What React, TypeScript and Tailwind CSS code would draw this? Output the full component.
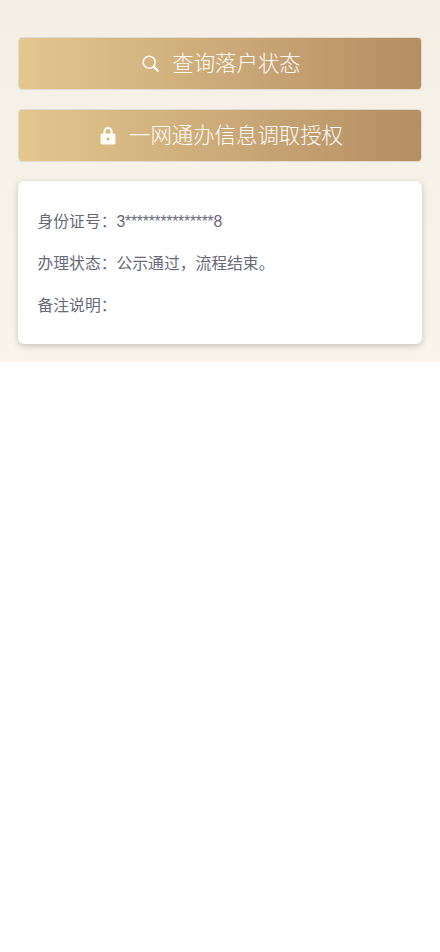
const font = "font-['Helvetica_Neue','Liberation_Sans','Noto_Sans_CJK_SC',sans-serif]";

function GoldButton({ icon, label }: { icon: React.ReactNode; label: string }) {
  return (
    <button className="flex h-[53px] w-full items-center justify-center gap-[13px] rounded-[4px] border border-[#dfdbd2] bg-gradient-to-r from-[#e3c78f] to-[#b58e64] pl-[3px] text-[21.4px] font-light text-[#fdfbf6]">
      {icon}
      <span className="pt-[2px]">{label}</span>
    </button>
  );
}

export default function App() {
  return (
    <div className={`min-h-[952px] w-full bg-white ${font}`}>
      <div className="flex h-[362px] flex-col gap-[19px] bg-gradient-to-b from-[#f4efe5] to-[#f9f5ed] px-[18px] pt-[37px]">
        <GoldButton
          icon={
            <svg width="17" height="17" viewBox="0 0 17 17" fill="none">
              <circle cx="7.2" cy="7.2" r="6" stroke="#fdfbf6" strokeWidth="1.6" />
              <path d="M11.6 11.6 15.8 15.8" stroke="#fdfbf6" strokeWidth="2.2" strokeLinecap="round" />
            </svg>
          }
          label="查询落户状态"
        />
        <GoldButton
          icon={
            <svg width="16" height="18" viewBox="0 0 16 18" fill="none">
              <path
                fillRule="evenodd"
                clipRule="evenodd"
                d="M3.4 6.4V4.6a4.6 4.6 0 0 1 9.2 0v1.8h1.2c1 0 1.7.7 1.7 1.7v7.7c0 1-.7 1.7-1.7 1.7H2.2c-1 0-1.7-.7-1.7-1.7V8.1c0-1 .7-1.7 1.7-1.7h1.2Zm2.1 0h5V4.6a2.5 2.5 0 0 0-5 0v1.8ZM8 10.4a1.6 1.6 0 1 0 0 3.2 1.6 1.6 0 0 0 0-3.2Z"
                fill="#fdfbf6"
              />
            </svg>
          }
          label="一网通办信息调取授权"
        />
        <div className="flex h-[163px] flex-col gap-[18px] rounded-[6px] bg-white pl-[19.5px] pr-[20px] pt-[29px] text-[15.8px] leading-[24px] text-[#676a76] shadow-[0_2px_6px_rgba(90,80,60,0.3)]">
          <p>
            身份证号：<span className="tracking-[-0.25px]">3***************8</span>
          </p>
          <p>办理状态：公示通过，流程结束。</p>
          <p>备注说明：</p>
        </div>
      </div>
    </div>
  );
}
